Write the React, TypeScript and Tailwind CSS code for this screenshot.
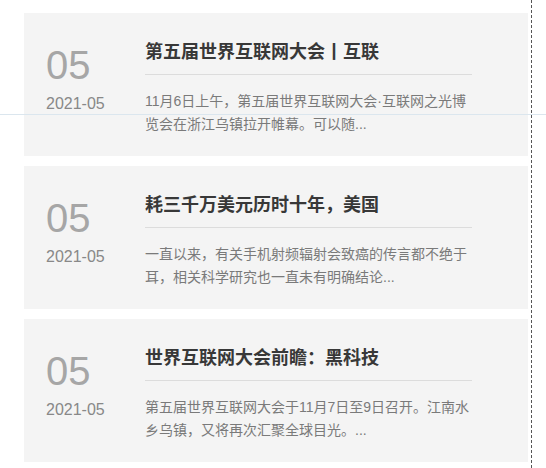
import React from 'react'

const news = [
  {
    day: '05',
    month: '2021-05',
    title: '第五届世界互联网大会丨互联',
    text: '11月6日上午，第五届世界互联网大会·互联网之光博览会在浙江乌镇拉开帷幕。可以随...',
  },
  {
    day: '05',
    month: '2021-05',
    title: '耗三千万美元历时十年，美国',
    text: '一直以来，有关手机射频辐射会致癌的传言都不绝于耳，相关科学研究也一直未有明确结论...',
  },
  {
    day: '05',
    month: '2021-05',
    title: '世界互联网大会前瞻：黑科技',
    text: '第五届世界互联网大会于11月7日至9日召开。江南水乡乌镇，又将再次汇聚全球目光。...',
  },
]

export default function App() {
  return (
    <div className="relative min-h-[468px] bg-white font-['Liberation_Sans','Noto_Sans_CJK_SC',sans-serif]">
      <div className="w-[532px] min-h-[468px] border-r border-dashed border-[#555] pl-[24px] pt-[13px]">
        <div className="flex flex-col gap-[10px] mr-[3px]">
          {news.map((item) => (
            <div key={item.title} className="flex h-[143px] bg-[#f4f4f4]">
              <div className="w-[121px] pl-[22px] pt-[32px]">
                <p className="text-[40px] leading-[40px] text-[#a6a6a6] font-['Helvetica_Neue','Liberation_Sans',sans-serif] font-light">
                  {item.day}
                </p>
                <p className="mt-[9px] text-[16px] leading-[20px] text-[#888]">
                  {item.month}
                </p>
              </div>
              <div className="w-[327px] pt-[25px]">
                <h3 className="pb-[12px] border-b border-[#dcdcdc] text-[18px] leading-[24px] font-bold text-[#383838] font-['Noto_Sans_CJK_SC',sans-serif]">
                  {item.title}
                </h3>
                <p className="mt-[15px] text-[14px] leading-[23px] text-[#7a7a7a] font-['Liberation_Sans','Noto_Sans_CJK_SC',sans-serif]">
                  {item.text}
                </p>
              </div>
            </div>
          ))}
        </div>
      </div>
      {/* guide line over the page */}
      <div className="absolute left-0 right-0 top-[114px] h-px bg-[#dbe6ee]" />
    </div>
  )
}
